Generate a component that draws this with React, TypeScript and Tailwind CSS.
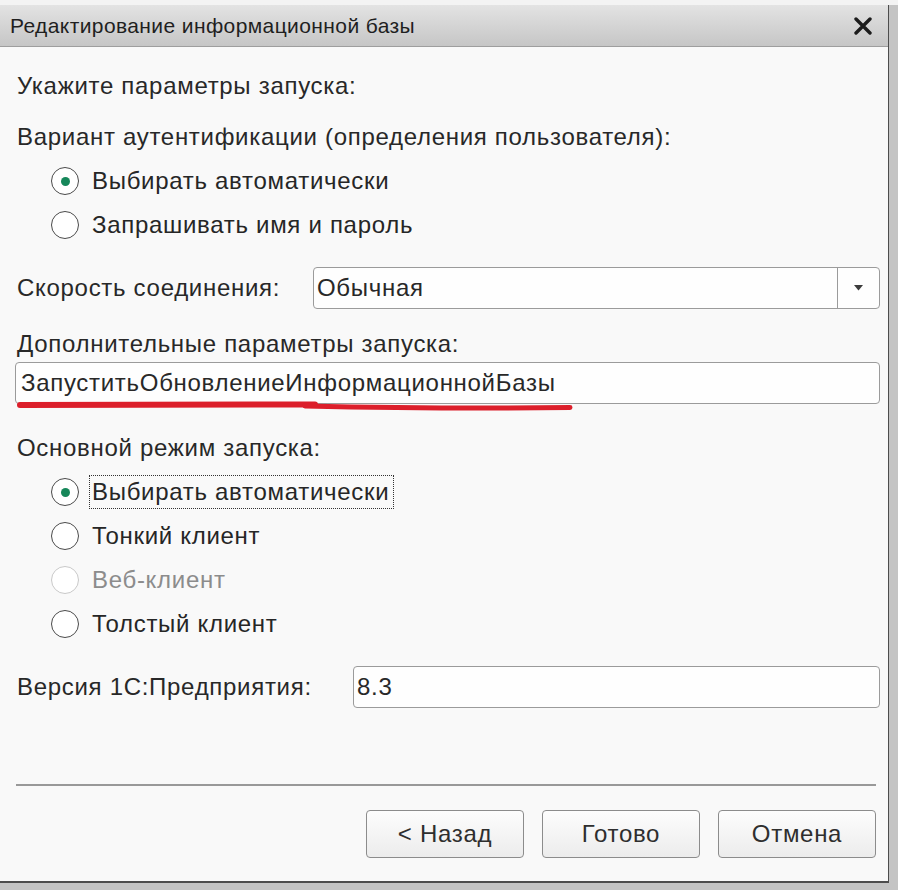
import type { ReactNode } from 'react';

const font = { fontFamily: '"Liberation Sans", Arial, sans-serif' };

function Radio({
  label,
  checked = false,
  disabled = false,
  focused = false,
}: {
  label: string;
  checked?: boolean;
  disabled?: boolean;
  focused?: boolean;
}) {
  return (
    <div className="flex h-[44px] items-center pl-[34px]">
      <span
        className={`flex h-[28px] w-[28px] shrink-0 items-center justify-center rounded-full border-[1.5px] bg-white ${
          disabled ? 'border-[#c9c9c9]' : 'border-[#4a4a4a]'
        }`}
      >
        {checked ? <span className="h-[9px] w-[9px] rounded-full bg-[#16875a]" /> : null}
      </span>
      <span
        className={`ml-[10px] pl-[2px] pr-[4px] leading-[32px] ${
          focused ? 'border border-dotted border-[#333]' : 'border border-transparent'
        } ${disabled ? 'text-[#8c8c8c]' : 'text-[#262626]'}`}
      >
        {label}
      </span>
    </div>
  );
}

function Field({ children, className = '' }: { children: ReactNode; className?: string }) {
  return (
    <div
      className={`flex h-[42px] items-center rounded-[4px] border border-[#9b9b9b] bg-[#fefefe] ${className}`}
    >
      {children}
    </div>
  );
}

function Button({ label }: { label: string }) {
  return (
    <button
      type="button"
      className="h-[48px] w-[158px] rounded-[4px] border border-[#8c8c8c] bg-gradient-to-b from-[#fdfdfd] to-[#ececec] text-[24px] tracking-[0.7px] text-[#2e2e2e]"
    >
      {label}
    </button>
  );
}

export default function App() {
  return (
    <div
      className="h-[890px] w-[898px] overflow-hidden bg-[#c4c4c4] text-[24px] tracking-[0.7px] text-[#282828]"
      style={font}
    >
      <div className="h-[5px] w-full bg-[#f3f3f3]" />
      <div className="flex h-[878px] w-[889px] flex-col border-r border-b-2 border-[#4d4d4d] bg-[#f9f9f9]">
        <div className="flex h-[42px] shrink-0 items-center justify-between border-b border-[#9e9e9e] bg-gradient-to-b from-[#e3e3e3] to-[#c6c6c6] pl-[10px] pr-[16px]">
          <span className="text-[21px] tracking-[0.4px] text-[#1f1f1f]">Редактирование информационной базы</span>
          <svg width="18" height="18" viewBox="0 0 18 18">
            <path d="M2 2 L16 16 M16 2 L2 16" stroke="#1c1c1c" strokeWidth="3.4" strokeLinecap="round" />
          </svg>
        </div>

        <div className="flex flex-1 flex-col pl-[17px] pr-[8px]">
          <div className="mt-[17px] flex h-[44px] items-center">Укажите параметры запуска:</div>
          <div className="mt-[7px] flex h-[44px] items-center">
            Вариант аутентификации (определения пользователя):
          </div>
          <Radio label="Выбирать автоматически" checked />
          <Radio label="Запрашивать имя и пароль" />

          <div className="mt-[20px] flex items-center">
            <span className="w-[296px] shrink-0">Скорость соединения:</span>
            <Field className="flex-1">
              <span className="flex-1 pl-[3px]">Обычная</span>
              <span className="flex h-full w-[42px] items-center justify-center border-l border-[#9b9b9b]">
                <svg width="9" height="6" viewBox="0 0 9 6">
                  <path d="M0 0 H9 L4.5 5.5 Z" fill="#3c3c3c" />
                </svg>
              </span>
            </Field>
          </div>

          <div className="mt-[20px] flex h-[30px] items-center">Дополнительные параметры запуска:</div>
          <div className="relative -ml-[2px] mt-[3px]">
            <Field>
              <span className="pl-[5px]">ЗапуститьОбновлениеИнформационнойБазы</span>
            </Field>
            <svg className="absolute left-0 top-[38px]" width="600" height="14" viewBox="0 0 600 14">
              <path d="M5 5 L300 4.5" stroke="#dc1f2b" strokeWidth="6" strokeLinecap="round" fill="none" />
              <path d="M290 6 Q430 9 555 7.5" stroke="#dc1f2b" strokeWidth="5" strokeLinecap="round" fill="none" />
            </svg>
          </div>

          <div className="mt-[22px] flex h-[44px] items-center">Основной режим запуска:</div>
          <Radio label="Выбирать автоматически" checked focused />
          <Radio label="Тонкий клиент" />
          <Radio label="Веб-клиент" disabled />
          <Radio label="Толстый клиент" />

          <div className="mt-[20px] flex items-center">
            <span className="w-[336px] shrink-0">Версия 1С:Предприятия:</span>
            <Field className="flex-1">
              <span className="pl-[3px]">8.3</span>
            </Field>
          </div>

          <div className="ml-[-1px] mr-[4px] mt-[76px] h-[2px] bg-[#999999]" />

          <div className="mr-[4px] mt-[24px] flex justify-end gap-[18px]">
            <Button label="< Назад" />
            <Button label="Готово" />
            <Button label="Отмена" />
          </div>
        </div>
      </div>
    </div>
  );
}
